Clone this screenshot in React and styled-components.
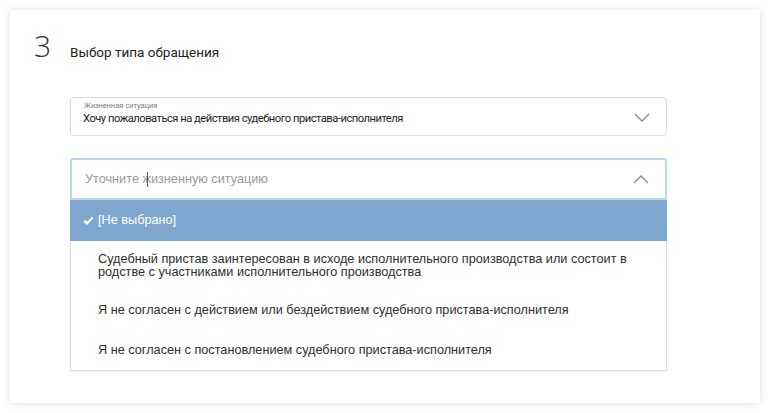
import React from "react";
import styled, { createGlobalStyle } from "styled-components";

const Global = createGlobalStyle`
  html, body { margin: 0; padding: 0; background: #ffffff; }
  body { font-family: "Liberation Sans", Arial, sans-serif; }
`;

const Page = styled.div`
  padding: 10px;
  width: 770px;
  height: 413px;
  box-sizing: border-box;
`;

const Card = styled.div`
  width: 750px;
  height: 393px;
  background: #fff;
  box-shadow: 0 0 8px rgba(0, 0, 0, 0.14);
  box-sizing: border-box;
  padding: 16px 0 0 24px;
`;

const Header = styled.div`
  display: flex;
  align-items: baseline;
`;

const StepNum = styled.div`
  width: 36px;
  font-family: "Open Sans", "Lato", sans-serif;
  font-weight: 300;
  font-size: 30px;
  line-height: 40px;
  color: #333;
`;

const Title = styled.div`
  font-family: Roboto, "Open Sans", sans-serif;
  font-size: 13.5px;
  color: #222;
`;

const Fields = styled.div`
  margin: 31px 0 0 36px;
  width: 597px;
`;

const Select = styled.div`
  position: relative;
  height: 39px;
  border: 1px solid #dcdcdc;
  border-radius: 4px;
  box-sizing: border-box;
  padding: 4px 40px 0 12px;
  display: flex;
  flex-direction: column;
`;

const TinyLabel = styled.div`
  font-size: 7.5px;
  color: #777;
  line-height: 8px;
  padding-left: 1px;
`;

const Value = styled.div`
  font-family: Roboto, sans-serif;
  font-size: 11.2px;
  letter-spacing: -0.5px;
  color: #1e1e1e;
  line-height: 16px;
  margin-top: 1px;
`;

const Chevron = styled.svg`
  position: absolute;
  right: 16px;
  top: ${(p) => p.$top}px;
`;

const Combo = styled.div`
  margin-top: 22px;
  position: relative;
`;

const Input = styled.div`
  position: relative;
  height: 42px;
  border: 2px solid #b8d8f6;
  border-radius: 3px 3px 0 0;
  box-sizing: border-box;
  display: flex;
  align-items: center;
  padding: 0 40px 0 13px;
  font-size: 12.7px;
  color: #999;
`;

const Caret = styled.span`
  position: absolute;
  left: 75px;
  top: 12px;
  width: 1px;
  height: 15px;
  background: #555;
`;

const List = styled.div`
  border: 1px solid #dedede;
  border-top: none;
  box-shadow: 0 1px 2px rgba(0, 0, 0, 0.06);
`;

const Item = styled.div`
  min-height: 40px;
  box-sizing: border-box;
  padding: 11.5px 30px 11.5px 27px;
  display: flex;
  align-items: center;
  font-size: 12.7px;
  line-height: 13px;
  color: ${(p) => (p.$active ? "#fff" : "#2e2e2e")};
  background: ${(p) => (p.$active ? "#7fa6cf" : "transparent")};
  ${(p) => (p.$active ? "margin: 0 -1px; padding-left: 28px; min-height: 41px;" : "")}
`;

const Check = styled.svg`
  margin-left: -15px;
  margin-right: 4px;
  flex: none;
`;

const items = [
  "Судебный пристав заинтересован в исходе исполнительного производства или состоит в родстве с участниками исполнительного производства",
  "Я не согласен с действием или бездействием судебного пристава-исполнителя",
  "Я не согласен с постановлением судебного пристава-исполнителя",
];

export default function App() {
  return (
    <>
      <Global />
      <Page>
        <Card>
          <Header>
            <StepNum>3</StepNum>
            <Title>Выбор типа обращения</Title>
          </Header>
          <Fields>
            <Select>
              <TinyLabel>Жизненная ситуация</TinyLabel>
              <Value>Хочу пожаловаться на действия судебного пристава-исполнителя</Value>
              <Chevron $top={15} width="16" height="9" viewBox="0 0 16 9">
                <path d="M1 1l7 7 7-7" fill="none" stroke="#888" strokeWidth="1.3" />
              </Chevron>
            </Select>
            <Combo>
              <Input>
                Уточните жизненную ситуацию
                <Caret />
                <Chevron $top={15} width="16" height="9" viewBox="0 0 16 9">
                  <path d="M1 8l7-7 7 7" fill="none" stroke="#888" strokeWidth="1.3" />
                </Chevron>
              </Input>
              <List>
                <Item $active>
                  <Check width="11" height="9" viewBox="0 0 11 9">
                    <path d="M1.2 4.6l2.8 2.8L9.8 1.4" fill="none" stroke="#fff" strokeWidth="2.2" />
                  </Check>
                  [Не выбрано]
                </Item>
                {items.map((t) => (
                  <Item key={t}>{t}</Item>
                ))}
              </List>
            </Combo>
          </Fields>
        </Card>
      </Page>
    </>
  );
}
